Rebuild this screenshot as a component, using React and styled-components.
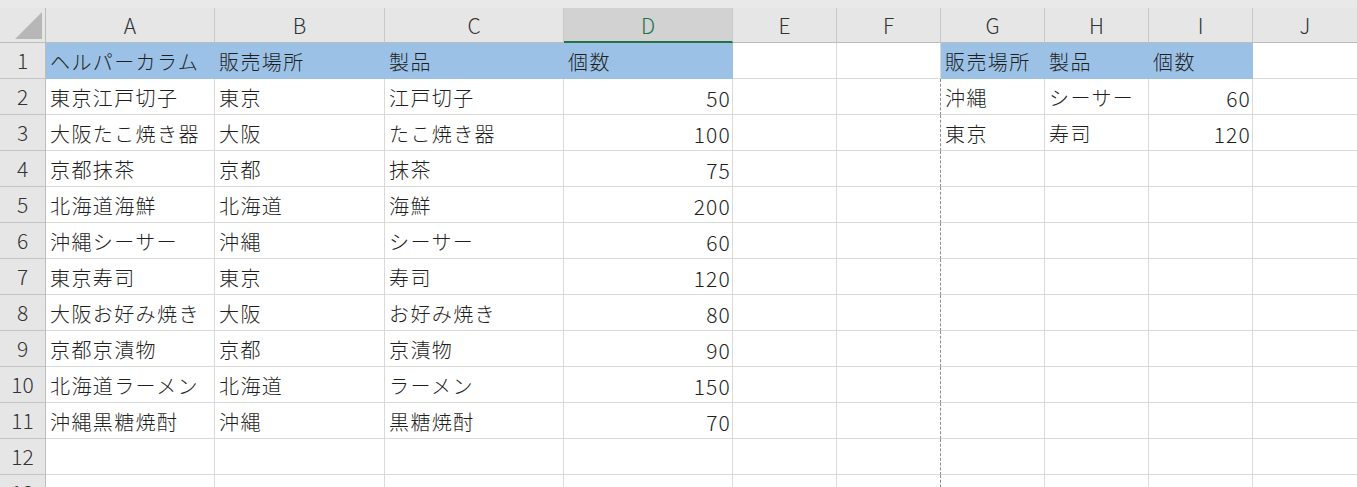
import React from 'react';
import styled, { createGlobalStyle } from 'styled-components';

const GlobalStyle = createGlobalStyle`
  html, body {
    margin: 0;
    padding: 0;
    background: #ffffff;
    overflow: hidden;
  }
  body {
    font-family: "Noto Sans CJK JP", "Noto Sans", sans-serif;
  }
`;

const COLUMNS = [
  { key: 'A', width: 169 },
  { key: 'B', width: 170 },
  { key: 'C', width: 179 },
  { key: 'D', width: 169 },
  { key: 'E', width: 104 },
  { key: 'F', width: 104 },
  { key: 'G', width: 104 },
  { key: 'H', width: 104 },
  { key: 'I', width: 104 },
  { key: 'J', width: 105 },
];

const ACTIVE_COLUMN = 'D';
const BLUE = '#9bc2e6';

// sparse cell data: rows[rowIndex][col] = value
const rows = [
  { A: 'ヘルパーカラム', B: '販売場所', C: '製品', D: '個数', G: '販売場所', H: '製品', I: '個数' },
  { A: '東京江戸切子', B: '東京', C: '江戸切子', D: 50, G: '沖縄', H: 'シーサー', I: 60 },
  { A: '大阪たこ焼き器', B: '大阪', C: 'たこ焼き器', D: 100, G: '東京', H: '寿司', I: 120 },
  { A: '京都抹茶', B: '京都', C: '抹茶', D: 75 },
  { A: '北海道海鮮', B: '北海道', C: '海鮮', D: 200 },
  { A: '沖縄シーサー', B: '沖縄', C: 'シーサー', D: 60 },
  { A: '東京寿司', B: '東京', C: '寿司', D: 120 },
  { A: '大阪お好み焼き', B: '大阪', C: 'お好み焼き', D: 80 },
  { A: '京都京漬物', B: '京都', C: '京漬物', D: 90 },
  { A: '北海道ラーメン', B: '北海道', C: 'ラーメン', D: 150 },
  { A: '沖縄黒糖焼酎', B: '沖縄', C: '黒糖焼酎', D: 70 },
  {},
  {},
];

const isFilled = (rowIndex, col) =>
  rowIndex === 0 && ['A', 'B', 'C', 'D', 'G', 'H', 'I'].includes(col);

const Sheet = styled.div`
  width: 1357px;
  height: 487px;
  display: flex;
  flex-direction: column;
  background: #ffffff;
`;

const TopStrip = styled.div`
  height: 8px;
  flex: none;
  background: #e9e9e9;
`;

const Grid = styled.div`
  display: grid;
  grid-template-columns: 46px ${COLUMNS.map((c) => `${c.width}px`).join(' ')};
  grid-template-rows: 35px;
  grid-auto-rows: 36px;
`;

const Corner = styled.div`
  position: relative;
  background: #e6e6e6;
  border-right: 1px solid #bcbcbc;
  border-bottom: 1px solid #bcbcbc;
`;

const CornerTriangle = styled.div`
  position: absolute;
  right: 3px;
  bottom: 3px;
  width: 27px;
  height: 27px;
  background: #b7b7b7;
  clip-path: polygon(100% 0, 100% 100%, 0 100%);
`;

const ColumnHeader = styled.div`
  display: flex;
  align-items: center;
  justify-content: center;
  box-sizing: border-box;
  background: ${(p) => (p.$active ? '#d2d2d2' : '#e6e6e6')};
  color: ${(p) => (p.$active ? '#217346' : '#333333')};
  border-right: 1px solid #c8c8c8;
  border-bottom: ${(p) => (p.$active ? '2px solid #217346' : '1px solid #bcbcbc')};
  font-size: 21px;
  font-weight: 300;
  line-height: 1;
  padding-top: ${(p) => (p.$active ? '1px' : '0')};
`;

const RowHeader = styled.div`
  display: flex;
  align-items: center;
  justify-content: center;
  box-sizing: border-box;
  background: #e6e6e6;
  color: #333333;
  border-right: 1px solid #bcbcbc;
  border-bottom: 1px solid #c4c4c4;
  font-size: 21px;
  font-weight: 300;
  line-height: 1;
`;

const Cell = styled.div`
  display: flex;
  align-items: center;
  justify-content: ${(p) => (p.$numeric ? 'flex-end' : 'flex-start')};
  box-sizing: border-box;
  padding: 3px ${(p) => (p.$numeric ? '1px' : '0')} 0 ${(p) => (p.$numeric ? '0' : '4px')};
  background: ${(p) => (p.$filled ? BLUE : '#ffffff')};
  color: #1f1f1f;
  border-right: 1px ${(p) => (p.$pageBreak ? 'dashed #8c8c8c' : 'solid')}
    ${(p) => (p.$pageBreak ? '' : p.$filled ? BLUE : '#d9d9d9')};
  border-bottom: 1px solid ${(p) => (p.$filled ? BLUE : '#d9d9d9')};
  font-size: ${(p) => (p.$numeric ? '21px' : '20px')};
  font-weight: 300;
  letter-spacing: ${(p) => (p.$numeric ? '1.2px' : '1.4px')};
  line-height: 1;
  white-space: nowrap;
  overflow: hidden;
`;

export default function App() {
  return (
    <>
      <GlobalStyle />
      <Sheet>
        <TopStrip />
        <Grid>
          <Corner>
            <CornerTriangle />
          </Corner>
          {COLUMNS.map((c) => (
            <ColumnHeader key={c.key} $active={c.key === ACTIVE_COLUMN}>
              {c.key}
            </ColumnHeader>
          ))}
          {rows.map((row, r) => (
            <React.Fragment key={r}>
              <RowHeader>{r + 1}</RowHeader>
              {COLUMNS.map((c) => {
                const value = row[c.key];
                const filled = isFilled(r, c.key);
                // page break line between F and G, below the header row
                const pageBreak = c.key === 'F' && r > 0;
                return (
                  <Cell
                    key={c.key}
                    $filled={filled}
                    $numeric={typeof value === 'number'}
                    $pageBreak={pageBreak}
                  >
                    {value}
                  </Cell>
                );
              })}
            </React.Fragment>
          ))}
        </Grid>
      </Sheet>
    </>
  );
}
